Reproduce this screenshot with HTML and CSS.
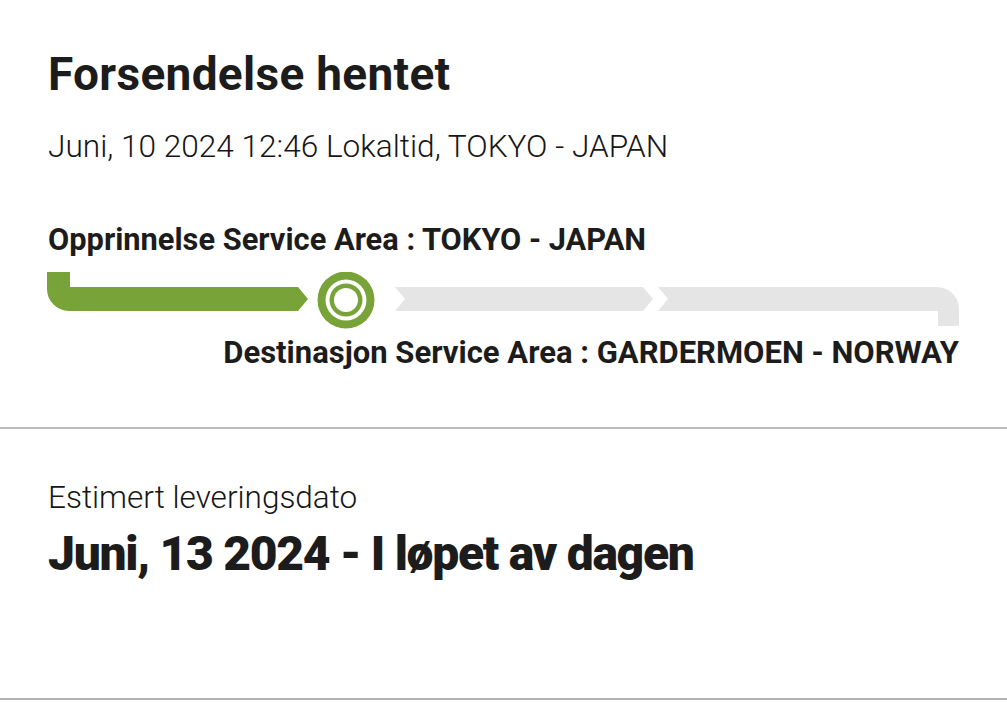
FILE: index.html
```html
<!DOCTYPE html>
<html lang="no">
<head>
<meta charset="utf-8">
<title>Forsendelse hentet</title>
<link rel="stylesheet" href="styles.css">
</head>
<body>
<section class="status">
  <h1 class="title">Forsendelse hentet</h1>
  <p class="time">Juni, 10 2024 12:46 Lokaltid, TOKYO - JAPAN</p>
  <p class="origin">Opprinnelse Service Area : TOKYO - JAPAN</p>
  <svg class="track" width="912" height="57" viewBox="0 0 912 57" aria-hidden="true">
    <path fill="#77a339" d="M0,0 H23 V15 H251 L261,27 L251,39 H22 A22,22 0 0 1 0,17 Z"/>
    <circle cx="299" cy="28" r="28.5" fill="#77a339"/>
    <circle cx="299" cy="28" r="20.5" fill="#ffffff"/>
    <circle cx="299" cy="28" r="16.5" fill="#77a339"/>
    <circle cx="299" cy="28" r="12" fill="#ffffff"/>
    <path fill="#e5e5e5" d="M348,15 H596 L606,27 L596,39 H348 L358,27 Z"/>
    <path fill="#e5e5e5" d="M611,15 H890 A22,22 0 0 1 912,37 V54 H891 V39 H611 L621,27 Z"/>
  </svg>
  <p class="destination">Destinasjon Service Area : GARDERMOEN - NORWAY</p>
</section>
<section class="estimate">
  <p class="est-label">Estimert leveringsdato</p>
  <p class="est-date">Juni, 13 2024 - I løpet av dagen</p>
</section>
</body>
</html>
```

FILE: styles.css
```css
* { box-sizing: border-box; }
html, body { margin: 0; padding: 0; background: #ffffff; }
body {
  font-family: Roboto, "Noto Sans", "Liberation Sans", sans-serif;
  color: #1c1c1c;
  width: 1007px;
  overflow: hidden;
}
p, h1 { margin: 0; }

.status {
  padding: 47px 48px 0 48px;
  height: 429px;
  border-bottom: 2px solid #bdbdbd;
  display: flex;
  flex-direction: column;
}
.title {
  font-size: 46px;
  font-weight: 700;
  line-height: 54px;
  letter-spacing: 0.3px;
}
.time {
  margin-top: 27px;
  font-size: 31.6px;
  font-weight: 300;
  line-height: 38px;
  color: #161616;
}
.origin {
  margin-top: 56px;
  font-size: 30.8px;
  font-weight: 700;
  line-height: 36px;
}
.track {
  display: block;
  margin-top: 14px;
  margin-left: -1px;
}
.destination {
  margin-top: 6px;
  align-self: flex-end;
  font-size: 31px;
  font-weight: 700;
  line-height: 36px;
}

.estimate {
  padding: 51px 48px 0 48px;
  height: 271px;
  border-bottom: 2px solid #b3b3b3;
}
.est-label {
  font-size: 31.5px;
  font-weight: 300;
  line-height: 36px;
  color: #161616;
}
.est-date {
  margin-top: 10px;
  font-size: 48px;
  font-weight: 900;
  line-height: 56px;
  letter-spacing: -1.3px;
}
```
